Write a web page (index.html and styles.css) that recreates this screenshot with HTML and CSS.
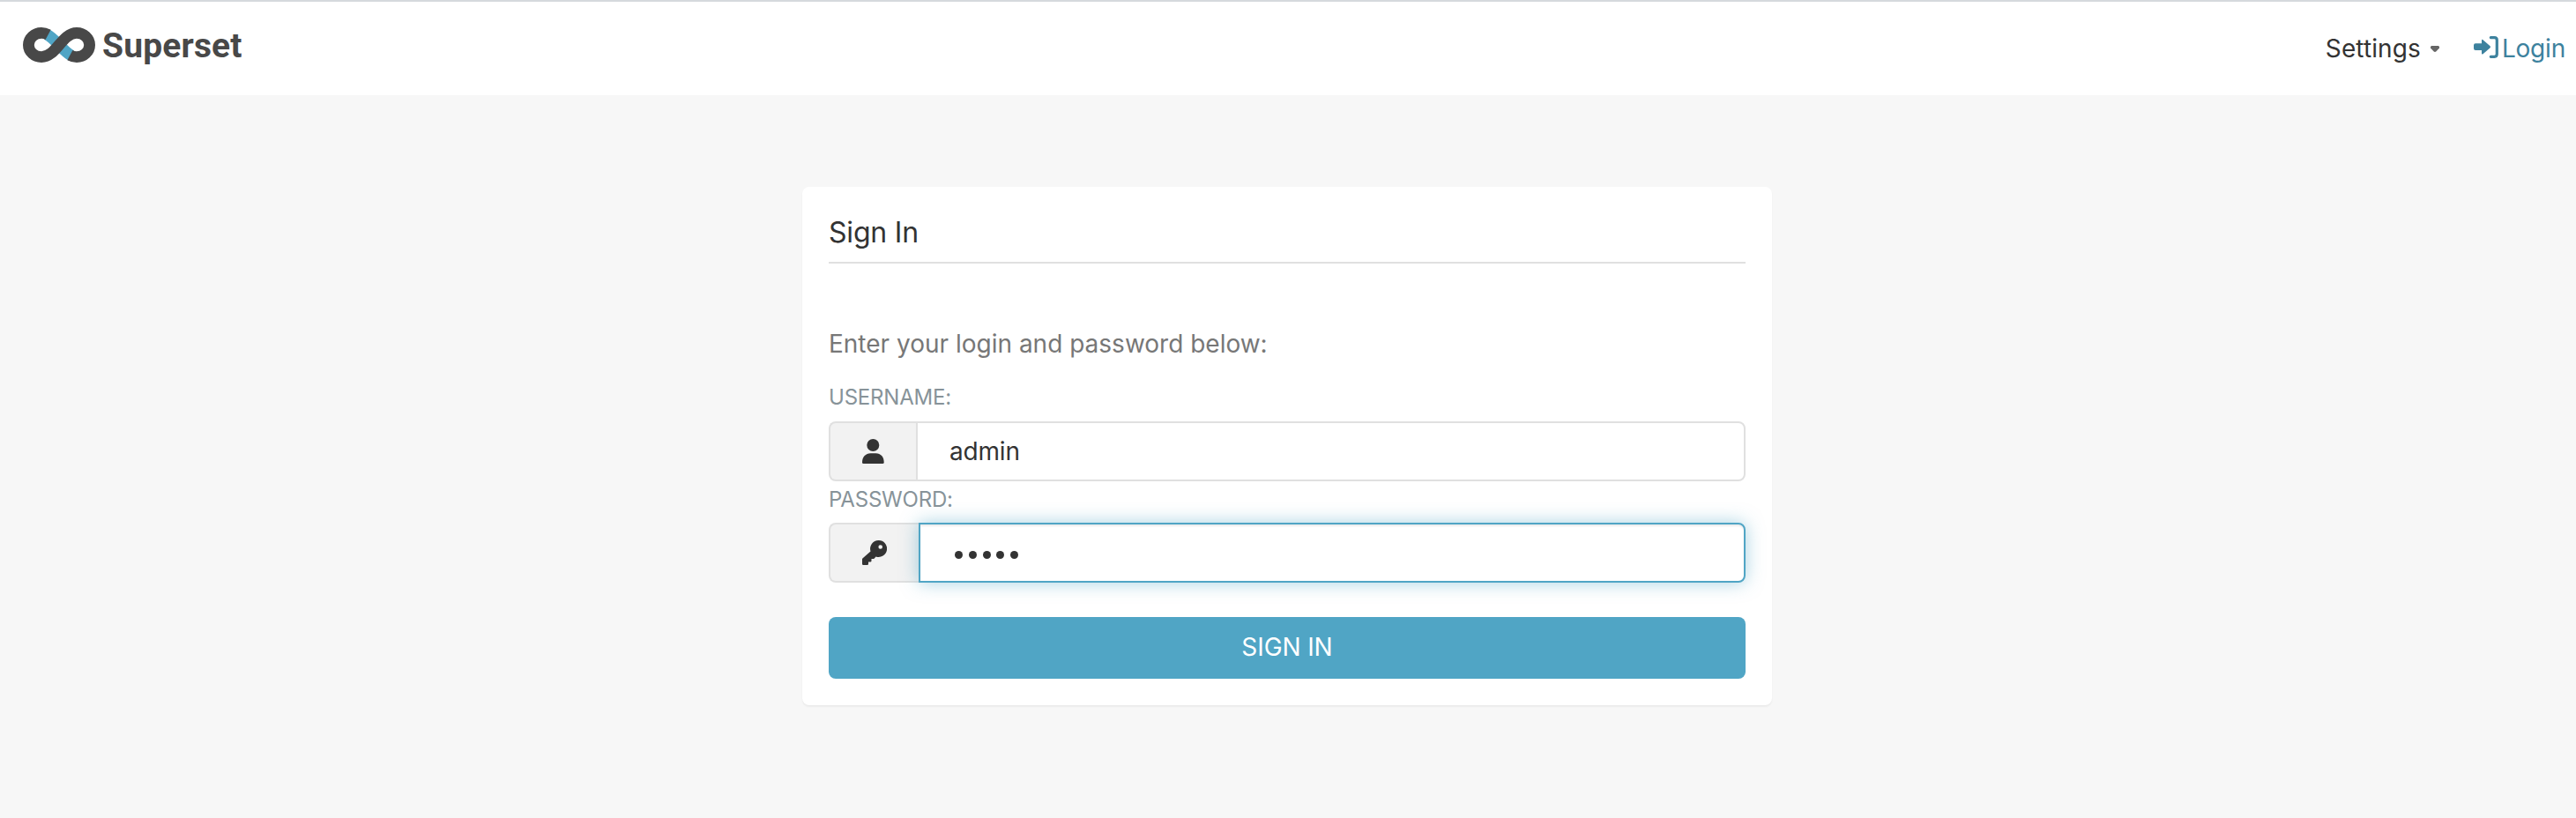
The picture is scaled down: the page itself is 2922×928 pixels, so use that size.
FILE: index.html
```html
<!DOCTYPE html>
<html lang="en">
<head>
<meta charset="utf-8">
<title>Superset</title>
<link rel="stylesheet" href="styles.css">
</head>
<body>
<header class="navbar">
  <a class="brand">
    <svg class="brand-mark" viewBox="0 0 82 40" width="82" height="40" fill="none" stroke-width="12.8">
      <path class="mark-accent" d="M27 8C37 13 45 27 55 32"/>
      <path class="mark-main" d="M28.6 8.4C26 7 23.500 6.400 21 6.400C13 6.400 6.400 12.500 6.400 20C6.400 27.500 13 33.600 21 33.600C38 33.600 44 6.400 61 6.400C69 6.400 75.600 12.500 75.600 20C75.600 27.500 69 33.600 61 33.600C58.500 33.600 56 33 53.400 31.600"/>
    </svg>
    <span class="brand-name">Superset</span>
  </a>
  <nav class="menu">
    <a class="menu-item settings">Settings
      <svg class="caret" viewBox="0 0 10 7" width="10" height="7"><path d="M1.200 0H8.800Q10 .3 10 1.500V2.500L6.200 6.500Q5 7.300 3.800 6.500L0 2.500V1.500Q0 .3 1.200 0Z"/></svg>
    </a>
    <a class="menu-item login">
      <svg class="login-icon" viewBox="0 0 28 25" width="28" height="25"><path d="M2 8.300H9V5Q9 3.200 10.500 4.200L18.600 11.200Q19.400 12.200 18.600 13.200L10.500 20.200Q9 21.200 9 19.400V16H2Q0 16 0 14V10.300Q0 8.300 2 8.300Z"/><path class="bracket" d="M19.300 1.600H23.500Q26.300 1.600 26.300 4.600V20.300Q26.300 23.300 23.500 23.300H19.300"/></svg><span>Login</span>
    </a>
  </nav>
</header>
<main class="page">
  <form class="card">
    <h1 class="card-title">Sign In</h1>
    <p class="help">Enter your login and password below:</p>
    <label class="label" for="username">Username:</label>
    <div class="group">
      <span class="addon"><svg viewBox="0 0 25 28" width="25" height="28"><circle cx="12.300" cy="7" r="7"/><path d="M0 26.500C0 20.500 4 16.300 9.500 16.300H15.500C21 16.300 24.700 20.500 24.700 26.500Q24.700 28 23.200 28H1.500Q0 28 0 26.500Z"/></svg></span>
      <input class="field" id="username" type="text" value="admin">
    </div>
    <label class="label label-password" for="password">Password:</label>
    <div class="group">
      <span class="addon addon-key"><svg viewBox="0 0 28 28" width="28" height="28"><path fill-rule="evenodd" d="M18.500 0A9.500 9.500 0 1 1 15.600 18.500L13.500 20.700Q13.100 21 12.600 21H10.500V23.200Q10.500 24.500 9.200 24.500H7V26.700Q7 28 5.700 28H1.300Q0 28 0 26.700V21.500Q0 21 .4 20.600L9.500 12.400A9.500 9.500 0 0 1 18.500 0ZM20.700 5.200A2.300 2.300 0 1 0 20.700 9.800A2.300 2.300 0 1 0 20.700 5.200Z"/></svg></span>
      <span class="field focused" id="password"><i class="dot"></i><i class="dot"></i><i class="dot"></i><i class="dot"></i><i class="dot"></i></span>
    </div>
    <button class="submit" type="button">Sign In</button>
  </form>
</main>
</body>
</html>
```
FILE: styles.css
```css
* { box-sizing: border-box; }
body {
  margin: 0;
  min-height: 928px;
  background: #f7f7f7;
  color: #333;
  font: 400 28px/40px Inter, sans-serif;
}
.navbar {
  display: flex;
  justify-content: space-between;
  height: 108px;
  padding: 0 12px 0 26px;
  border-top: 2px solid #d5d9dd;
  background: #fff;
}
.brand { display: flex; align-items: flex-start; gap: 8px; padding-top: 29px; }
.mark-main { stroke: #484848; }
.mark-accent { stroke: #50a5c5; }
.brand-name {
  color: #484848;
  font: 700 39px/40px Roboto, sans-serif;
  letter-spacing: .15px;
  margin-top: 1px;
}
.menu { display: flex; gap: 39px; padding-top: 33px; }
.menu-item { display: flex; }
.settings { letter-spacing: .1px; }
.caret { margin: 17px 0 0 11px; fill: #666; }
.login { color: #3d829e; letter-spacing: -.2px; }
.login-icon { margin: 6px 4px 0 0; fill: currentColor; }
.bracket { fill: none; stroke: currentColor; stroke-width: 3.2; stroke-linecap: round; }
.page { padding-top: 104px; }
.card {
  display: flex;
  flex-direction: column;
  width: 1100px;
  height: 588px;
  margin-left: 910px;
  padding: 30px;
  border-radius: 8px;
  background: #fff;
  box-shadow: 0 2px 2px rgba(0, 0, 0, .05);
}
.card-title {
  height: 57px;
  margin: 0 0 71px;
  padding-top: 2px;
  border-bottom: 2px solid #e0e0e0;
  font-size: 32px;
  font-weight: 400;
  letter-spacing: -.2px;
  line-height: 40px;
}
.help { margin: 0 0 27px; color: #777; line-height: 40px; }
.label {
  height: 41px;
  color: #879399;
  font-size: 24px;
  letter-spacing: -.2px;
  line-height: 28px;
  text-transform: uppercase;
}
.label-password { height: 47px; padding-top: 7px; }
.group { display: flex; height: 68px; flex: none; }
.addon {
  display: flex;
  align-items: center;
  justify-content: center;
  width: 99px;
  border: 2px solid #e0e0e0;
  border-right: 0;
  border-radius: 8px 0 0 8px;
  background: #f2f2f2;
  fill: #333;
}
.addon-key { width: 102px; }
.field {
  flex: 1;
  min-width: 0;
  padding: 0 36px;
  border: 2px solid #e0e0e0;
  border-radius: 0 8px 8px 0;
  outline: 0;
  background: #fff;
  color: #333;
  font: 400 28px/40px Inter, sans-serif;
  letter-spacing: -.2px;
}
.focused {
  display: flex;
  align-items: center;
  gap: 6.800px;
  padding: 4px 39px 0;
  border-color: #50a5c5;
  box-shadow: inset 0 2px 2px rgba(0, 0, 0, .075), 0 0 20px rgba(80, 165, 197, .5);
}
.dot { width: 9px; height: 9px; border-radius: 50%; background: #333; }
.submit {
  height: 70px;
  margin-top: 39px;
  padding: 0 0 2px;
  border: 0;
  border-radius: 8px;
  background: #50a5c5;
  color: #fff;
  font: 400 28px/40px Inter, sans-serif;
  letter-spacing: -.1px;
  text-transform: uppercase;
}
```
